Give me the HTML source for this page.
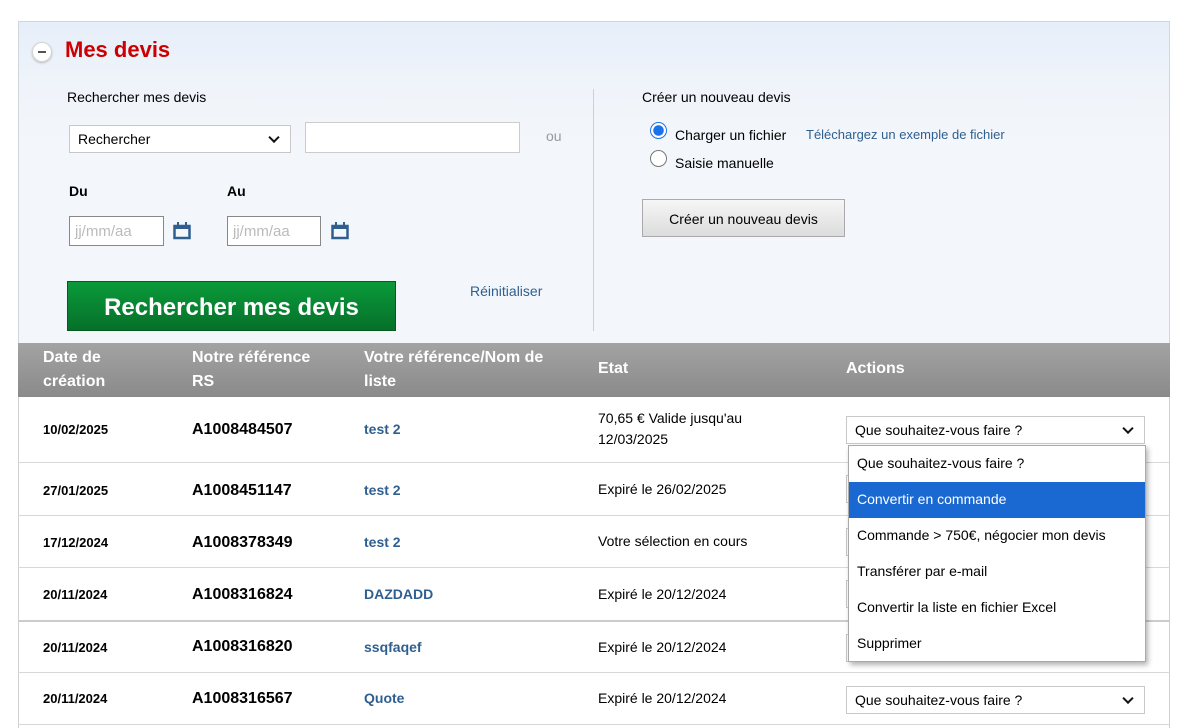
<!DOCTYPE html>
<html><head><meta charset="utf-8"><style>
*{box-sizing:border-box;margin:0;padding:0}
body{width:1199px;height:728px;background:#fff;font-family:"Liberation Sans",Arial,sans-serif;position:relative;overflow:hidden;color:#000}
.a{position:absolute}
.top{left:18px;top:21px;width:1152px;height:322px;border:1px solid #cfd6de;border-bottom:none;background:linear-gradient(#e6eef9 0px,#eff4fa 60px,#f3f6fa 120px,#f3f6fa)}
.t13{font-size:14px}
.sel{background:#fff;border:1px solid #c8c8c8;font-size:14px;padding-left:8px;display:flex;align-items:center}
.chev{position:absolute;right:12px;top:50%;width:8px;height:8px;border-right:2px solid #111;border-bottom:2px solid #111;transform:translateY(-70%) rotate(45deg)}
.inp{background:#fff;border:1px solid #ccc}
.date{background:#fff;border:1px solid #888;font-size:15px;color:#bbb;padding-left:5px;display:flex;align-items:center}
.hd{left:18px;top:343px;width:1152px;height:54px;background:linear-gradient(#a3a3a3,#8a8a8a);color:#fff;font-weight:bold;font-size:16px}
.hd div{position:absolute;line-height:24px}
.row{left:18px;width:1152px;border-top:1px solid #d8d8d8}
.c1{position:absolute;left:25px;font-size:13px;font-weight:bold}
.c2{position:absolute;left:174px;font-size:16px;font-weight:bold}
.c3{position:absolute;left:346px;font-size:14px;font-weight:bold;color:#2f5f8f}
.c4{position:absolute;left:580px;font-size:14px;line-height:21px}
.act{position:absolute;left:828px;width:299px;height:28px}
.dd{left:848px;top:445px;width:298px;height:217px;background:#fff;border:1px solid #aaa;box-shadow:2px 3px 5px rgba(0,0,0,.3);font-size:14px}
.dd div{height:36px;line-height:35px;padding-left:8px}
.dd .hl{background:#1a68d1;color:#fff}
</style></head><body>
<div class="a top"></div>
<div class="a" style="left:32px;top:42px;width:20px;height:20px;border-radius:50%;background:#fff;border:1px solid #d5d5d5;box-shadow:0 1px 2px #bbb"></div>
<div class="a" style="left:38px;top:51px;width:8px;height:2px;background:#555"></div>
<div class="a" style="left:65px;top:37px;font-size:22px;font-weight:bold;color:#cc0000">Mes devis</div>
<div class="a t13" style="left:67px;top:89px">Rechercher mes devis</div>
<div class="a sel" style="left:69px;top:125px;width:222px;height:28px">Rechercher<span class="chev"></span></div>
<div class="a inp" style="left:305px;top:122px;width:215px;height:31px"></div>
<div class="a t13" style="left:546px;top:128px;color:#999">ou</div>
<div class="a t13" style="left:69px;top:183px;font-weight:bold">Du</div>
<div class="a t13" style="left:227px;top:183px;font-weight:bold">Au</div>
<div class="a date" style="left:69px;top:216px;width:95px;height:30px">jj/mm/aa</div>
<div class="a date" style="left:227px;top:216px;width:94px;height:30px">jj/mm/aa</div>
<svg class="a" style="left:173px;top:222px" width="18" height="18"><rect x="1.5" y="4" width="15" height="12" fill="none" stroke="#2f5f8f" stroke-width="2.5"/><rect x="1" y="3" width="16" height="4" fill="#2f5f8f"/><rect x="4" y="0" width="2" height="4" fill="#2f5f8f"/><rect x="12" y="0" width="2" height="4" fill="#2f5f8f"/></svg>
<svg class="a" style="left:331px;top:222px" width="18" height="18"><rect x="1.5" y="4" width="15" height="12" fill="none" stroke="#2f5f8f" stroke-width="2.5"/><rect x="1" y="3" width="16" height="4" fill="#2f5f8f"/><rect x="4" y="0" width="2" height="4" fill="#2f5f8f"/><rect x="12" y="0" width="2" height="4" fill="#2f5f8f"/></svg>
<div class="a" style="left:67px;top:281px;width:329px;height:50px;background:linear-gradient(#0a9a3a,#06702a);border:1px solid #055a20;color:#fff;font-size:24px;font-weight:bold;text-align:center;line-height:52px">Rechercher mes devis</div>
<div class="a t13" style="left:470px;top:283px;color:#2f5f8f">Réinitialiser</div>
<div class="a" style="left:593px;top:89px;width:1px;height:242px;background:#d0d0d0"></div>
<div class="a t13" style="left:642px;top:89px">Créer un nouveau devis</div>
<div class="a" style="left:650px;top:122px;width:17px;height:17px;border-radius:50%;border:1px solid #1a73e8;background:radial-gradient(#1a73e8 0 5px,#fff 5.5px)"></div>
<div class="a t13" style="left:675px;top:127px">Charger un fichier</div>
<div class="a" style="left:806px;top:127px;font-size:13px;color:#2f5f8f">Téléchargez un exemple de fichier</div>
<div class="a" style="left:650px;top:150px;width:17px;height:17px;border-radius:50%;border:1px solid #777;background:#fff"></div>
<div class="a t13" style="left:675px;top:155px">Saisie manuelle</div>
<div class="a" style="left:642px;top:199px;width:203px;height:38px;border:1px solid #aaa;background:linear-gradient(#f6f6f6,#dcdcdc);font-size:14px;text-align:center;line-height:38px">Créer un nouveau devis</div>

<div class="a" style="left:1169px;top:343px;width:1px;height:385px;background:#d0d0d0"></div>
<div class="a" style="left:18px;top:397px;width:1px;height:331px;background:#d0d0d0"></div>
<div class="a hd">
<div style="left:25px;top:3px">Date de<br>création</div>
<div style="left:174px;top:3px">Notre référence<br>RS</div>
<div style="left:346px;top:3px">Votre référence/Nom de<br>liste</div>
<div style="left:580px;top:14px">Etat</div>
<div style="left:828px;top:14px">Actions</div>
</div>

<div class="a row" style="top:397px;height:65px;border-top:none"><div class="c1" style="top:25px">10/02/2025</div><div class="c2" style="top:24px">A1008484507</div><div class="c3" style="top:24px">test 2</div><div class="c4" style="top:11px">70,65 € Valide jusqu'au<br>12/03/2025</div><div class="act sel" style="top:19px">Que souhaitez-vous faire ?<span class="chev"></span></div></div>
<div class="a row" style="top:462px;height:53px"><div class="c1" style="top:20px">27/01/2025</div><div class="c2" style="top:19px">A1008451147</div><div class="c3" style="top:19px">test 2</div><div class="c4" style="top:16px">Expiré le 26/02/2025</div><div class="act sel" style="top:12px">Que souhaitez-vous faire ?</div></div>
<div class="a row" style="top:515px;height:52px"><div class="c1" style="top:19px">17/12/2024</div><div class="c2" style="top:18px">A1008378349</div><div class="c3" style="top:18px">test 2</div><div class="c4" style="top:15px">Votre sélection en cours</div><div class="act sel" style="top:12px"></div></div>
<div class="a row" style="top:567px;height:53px"><div class="c1" style="top:19px">20/11/2024</div><div class="c2" style="top:18px">A1008316824</div><div class="c3" style="top:18px">DAZDADD</div><div class="c4" style="top:16px">Expiré le 20/12/2024</div><div class="act sel" style="top:12px"></div></div>
<div class="a row" style="top:620px;height:52px;border-top:2px solid #ccc"><div class="c1" style="top:18px">20/11/2024</div><div class="c2" style="top:16px">A1008316820</div><div class="c3" style="top:17px">ssqfaqef</div><div class="c4" style="top:15px">Expiré le 20/12/2024</div><div class="act sel" style="top:12px"></div></div>
<div class="a row" style="top:672px;height:53px;border-bottom:1px solid #d8d8d8"><div class="c1" style="top:18px">20/11/2024</div><div class="c2" style="top:17px">A1008316567</div><div class="c3" style="top:17px">Quote</div><div class="c4" style="top:15px">Expiré le 20/12/2024</div><div class="act sel" style="top:13px">Que souhaitez-vous faire ?<span class="chev"></span></div></div>

<div class="a dd">
<div>Que souhaitez-vous faire ?</div>
<div class="hl">Convertir en commande</div>
<div>Commande &gt; 750€, négocier mon devis</div>
<div>Transférer par e-mail</div>
<div>Convertir la liste en fichier Excel</div>
<div>Supprimer</div>
</div>
</body></html>
